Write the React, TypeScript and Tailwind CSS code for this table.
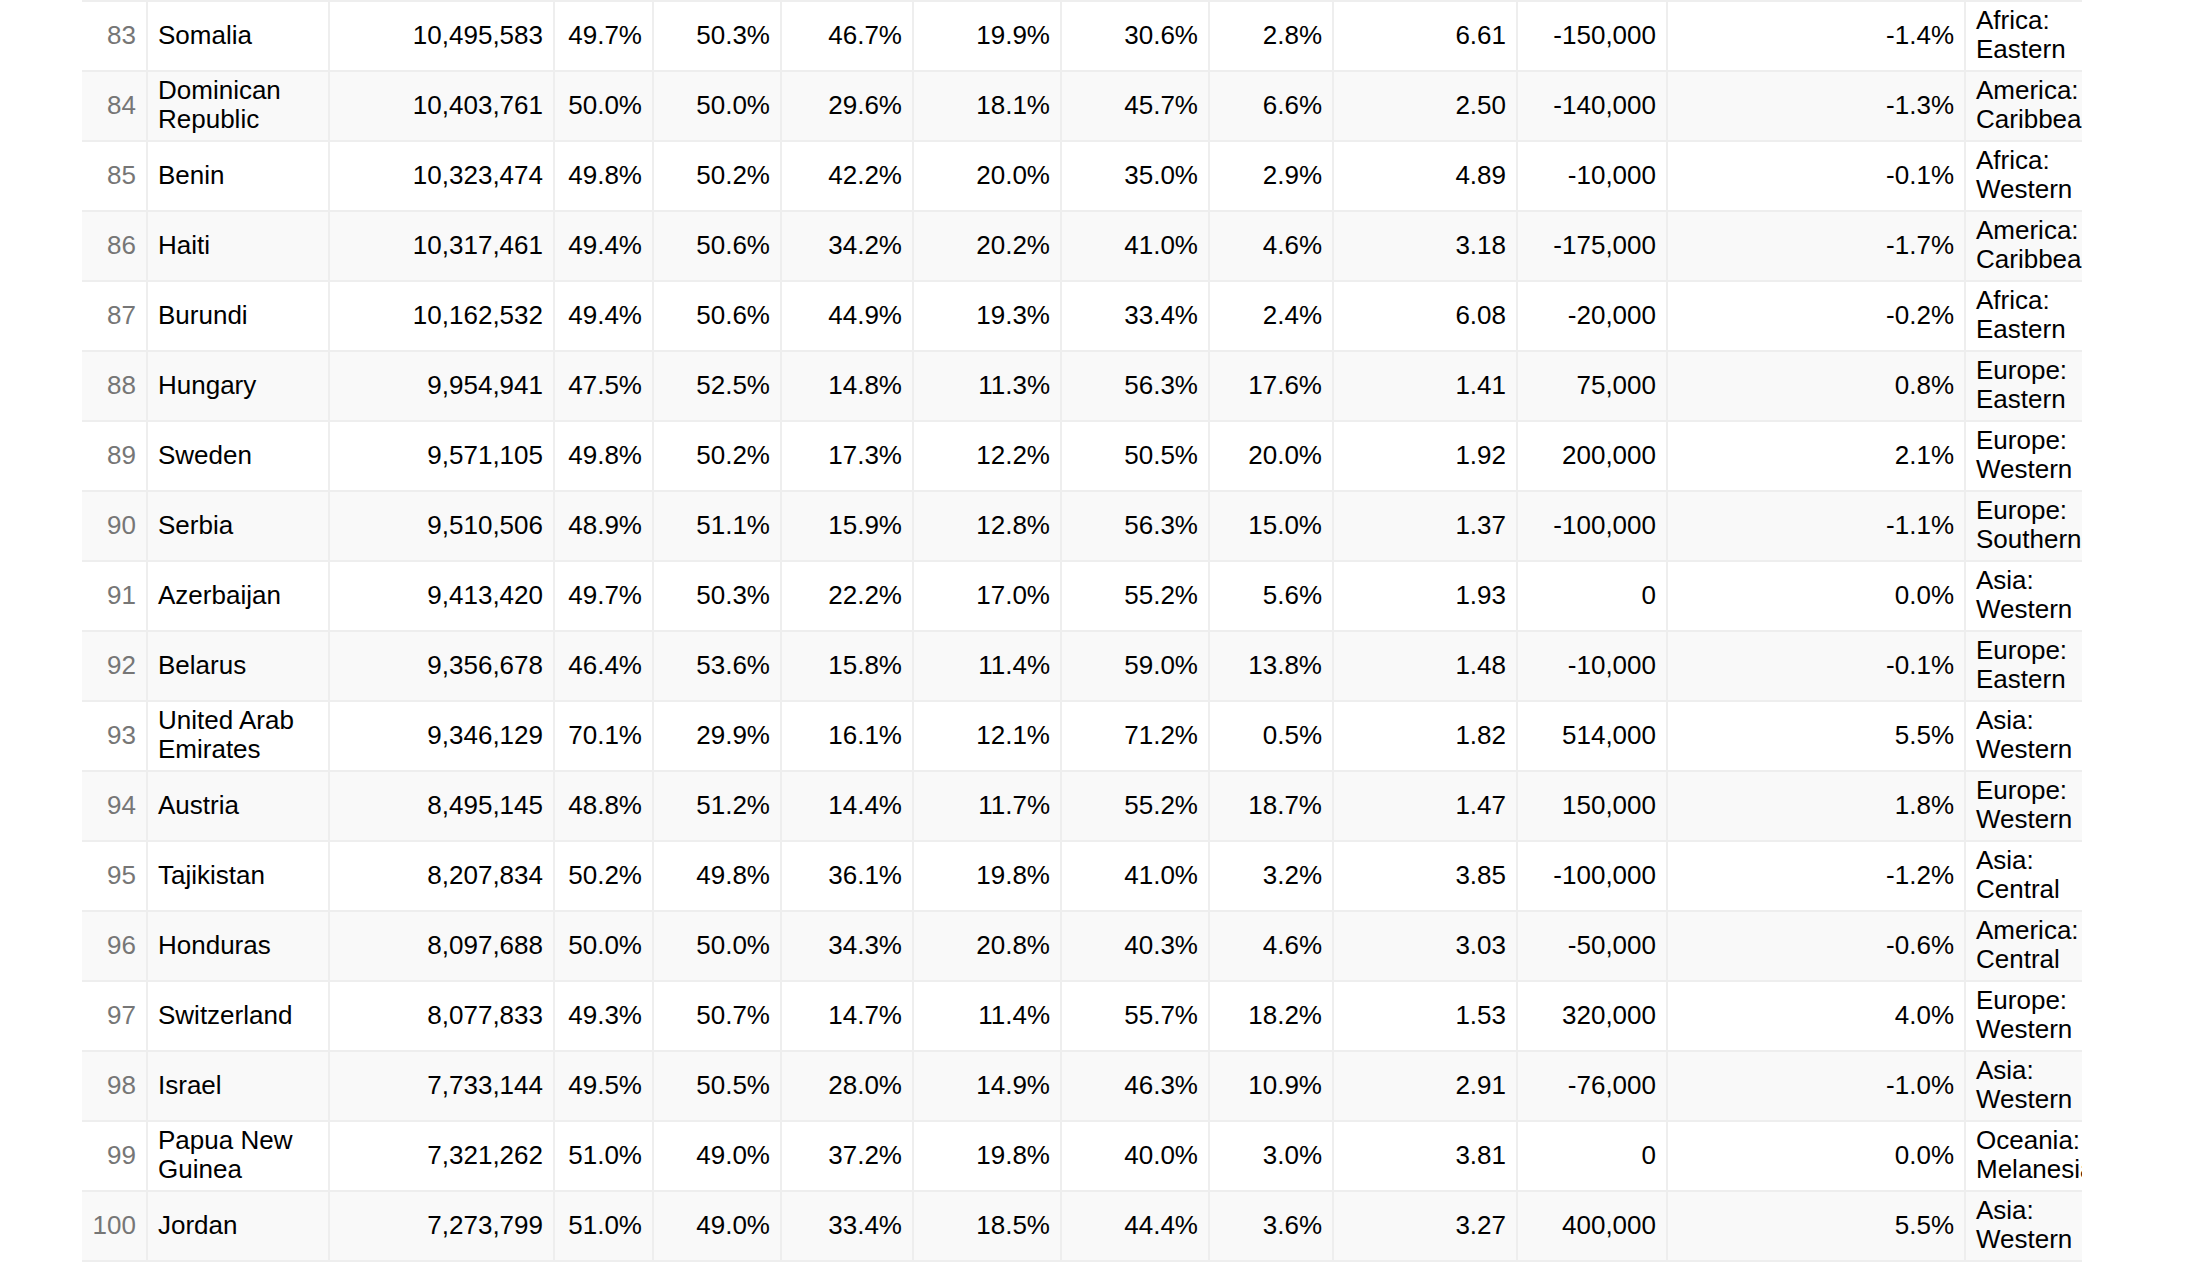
import React from 'react';

type Row = {
  rank: number;
  name: string;
  pop: string;
  male: string;
  female: string;
  young: string;
  teen: string;
  adult: string;
  senior: string;
  fert: string;
  migr: string;
  migrRate: string;
  region: string;
};

const rows: Row[] = [
  { rank: 83, name: 'Somalia', pop: '10,495,583', male: '49.7%', female: '50.3%', young: '46.7%', teen: '19.9%', adult: '30.6%', senior: '2.8%', fert: '6.61', migr: '-150,000', migrRate: '-1.4%', region: 'Africa: Eastern' },
  { rank: 84, name: 'Dominican Republic', pop: '10,403,761', male: '50.0%', female: '50.0%', young: '29.6%', teen: '18.1%', adult: '45.7%', senior: '6.6%', fert: '2.50', migr: '-140,000', migrRate: '-1.3%', region: 'America: Caribbean' },
  { rank: 85, name: 'Benin', pop: '10,323,474', male: '49.8%', female: '50.2%', young: '42.2%', teen: '20.0%', adult: '35.0%', senior: '2.9%', fert: '4.89', migr: '-10,000', migrRate: '-0.1%', region: 'Africa: Western' },
  { rank: 86, name: 'Haiti', pop: '10,317,461', male: '49.4%', female: '50.6%', young: '34.2%', teen: '20.2%', adult: '41.0%', senior: '4.6%', fert: '3.18', migr: '-175,000', migrRate: '-1.7%', region: 'America: Caribbean' },
  { rank: 87, name: 'Burundi', pop: '10,162,532', male: '49.4%', female: '50.6%', young: '44.9%', teen: '19.3%', adult: '33.4%', senior: '2.4%', fert: '6.08', migr: '-20,000', migrRate: '-0.2%', region: 'Africa: Eastern' },
  { rank: 88, name: 'Hungary', pop: '9,954,941', male: '47.5%', female: '52.5%', young: '14.8%', teen: '11.3%', adult: '56.3%', senior: '17.6%', fert: '1.41', migr: '75,000', migrRate: '0.8%', region: 'Europe: Eastern' },
  { rank: 89, name: 'Sweden', pop: '9,571,105', male: '49.8%', female: '50.2%', young: '17.3%', teen: '12.2%', adult: '50.5%', senior: '20.0%', fert: '1.92', migr: '200,000', migrRate: '2.1%', region: 'Europe: Western' },
  { rank: 90, name: 'Serbia', pop: '9,510,506', male: '48.9%', female: '51.1%', young: '15.9%', teen: '12.8%', adult: '56.3%', senior: '15.0%', fert: '1.37', migr: '-100,000', migrRate: '-1.1%', region: 'Europe: Southern' },
  { rank: 91, name: 'Azerbaijan', pop: '9,413,420', male: '49.7%', female: '50.3%', young: '22.2%', teen: '17.0%', adult: '55.2%', senior: '5.6%', fert: '1.93', migr: '0', migrRate: '0.0%', region: 'Asia: Western' },
  { rank: 92, name: 'Belarus', pop: '9,356,678', male: '46.4%', female: '53.6%', young: '15.8%', teen: '11.4%', adult: '59.0%', senior: '13.8%', fert: '1.48', migr: '-10,000', migrRate: '-0.1%', region: 'Europe: Eastern' },
  { rank: 93, name: 'United Arab Emirates', pop: '9,346,129', male: '70.1%', female: '29.9%', young: '16.1%', teen: '12.1%', adult: '71.2%', senior: '0.5%', fert: '1.82', migr: '514,000', migrRate: '5.5%', region: 'Asia: Western' },
  { rank: 94, name: 'Austria', pop: '8,495,145', male: '48.8%', female: '51.2%', young: '14.4%', teen: '11.7%', adult: '55.2%', senior: '18.7%', fert: '1.47', migr: '150,000', migrRate: '1.8%', region: 'Europe: Western' },
  { rank: 95, name: 'Tajikistan', pop: '8,207,834', male: '50.2%', female: '49.8%', young: '36.1%', teen: '19.8%', adult: '41.0%', senior: '3.2%', fert: '3.85', migr: '-100,000', migrRate: '-1.2%', region: 'Asia: Central' },
  { rank: 96, name: 'Honduras', pop: '8,097,688', male: '50.0%', female: '50.0%', young: '34.3%', teen: '20.8%', adult: '40.3%', senior: '4.6%', fert: '3.03', migr: '-50,000', migrRate: '-0.6%', region: 'America: Central' },
  { rank: 97, name: 'Switzerland', pop: '8,077,833', male: '49.3%', female: '50.7%', young: '14.7%', teen: '11.4%', adult: '55.7%', senior: '18.2%', fert: '1.53', migr: '320,000', migrRate: '4.0%', region: 'Europe: Western' },
  { rank: 98, name: 'Israel', pop: '7,733,144', male: '49.5%', female: '50.5%', young: '28.0%', teen: '14.9%', adult: '46.3%', senior: '10.9%', fert: '2.91', migr: '-76,000', migrRate: '-1.0%', region: 'Asia: Western' },
  { rank: 99, name: 'Papua New Guinea', pop: '7,321,262', male: '51.0%', female: '49.0%', young: '37.2%', teen: '19.8%', adult: '40.0%', senior: '3.0%', fert: '3.81', migr: '0', migrRate: '0.0%', region: 'Oceania: Melanesia' },
  { rank: 100, name: 'Jordan', pop: '7,273,799', male: '51.0%', female: '49.0%', young: '33.4%', teen: '18.5%', adult: '44.4%', senior: '3.6%', fert: '3.27', migr: '400,000', migrRate: '5.5%', region: 'Asia: Western' },
];

// numeric cell, right aligned
const Num = ({ children }: { children: React.ReactNode }) => (
  <div className="flex items-center justify-end border-r-2 border-[#eeeeee] px-[10px] pb-[2px]">
    {children}
  </div>
);

const App = () => {
  return (
    <div className="min-h-screen bg-white font-['Liberation_Sans',Arial,sans-serif] text-[26px] leading-[29px] text-black">
      {/* table is wider than its box, last column gets clipped */}
      <div className="ml-[82px] w-[2000px] overflow-hidden border-t-2 border-[#eeeeee]">
        {rows.map((r, i) => (
          <div
            key={r.rank}
            className={`grid h-[70px] grid-cols-[66px_182px_225px_99px_128px_132px_148px_148px_124px_184px_150px_298px_150px] border-b-2 border-[#eeeeee] ${
              i % 2 === 1 ? 'bg-[#f9f9f9]' : 'bg-white'
            }`}
          >
            <div className="flex items-center justify-end border-r-2 border-[#eeeeee] px-[10px] pb-[2px] text-[#767676]">
              {r.rank}
            </div>
            <div className="flex items-center border-r-2 border-[#eeeeee] px-[10px] pb-[2px]">
              {r.name}
            </div>
            <Num>{r.pop}</Num>
            <Num>{r.male}</Num>
            <Num>{r.female}</Num>
            <Num>{r.young}</Num>
            <Num>{r.teen}</Num>
            <Num>{r.adult}</Num>
            <Num>{r.senior}</Num>
            <Num>{r.fert}</Num>
            <Num>{r.migr}</Num>
            <Num>{r.migrRate}</Num>
            <div className="flex items-center px-[10px] pb-[2px]">{r.region}</div>
          </div>
        ))}
      </div>
    </div>
  );
};

export default App;
